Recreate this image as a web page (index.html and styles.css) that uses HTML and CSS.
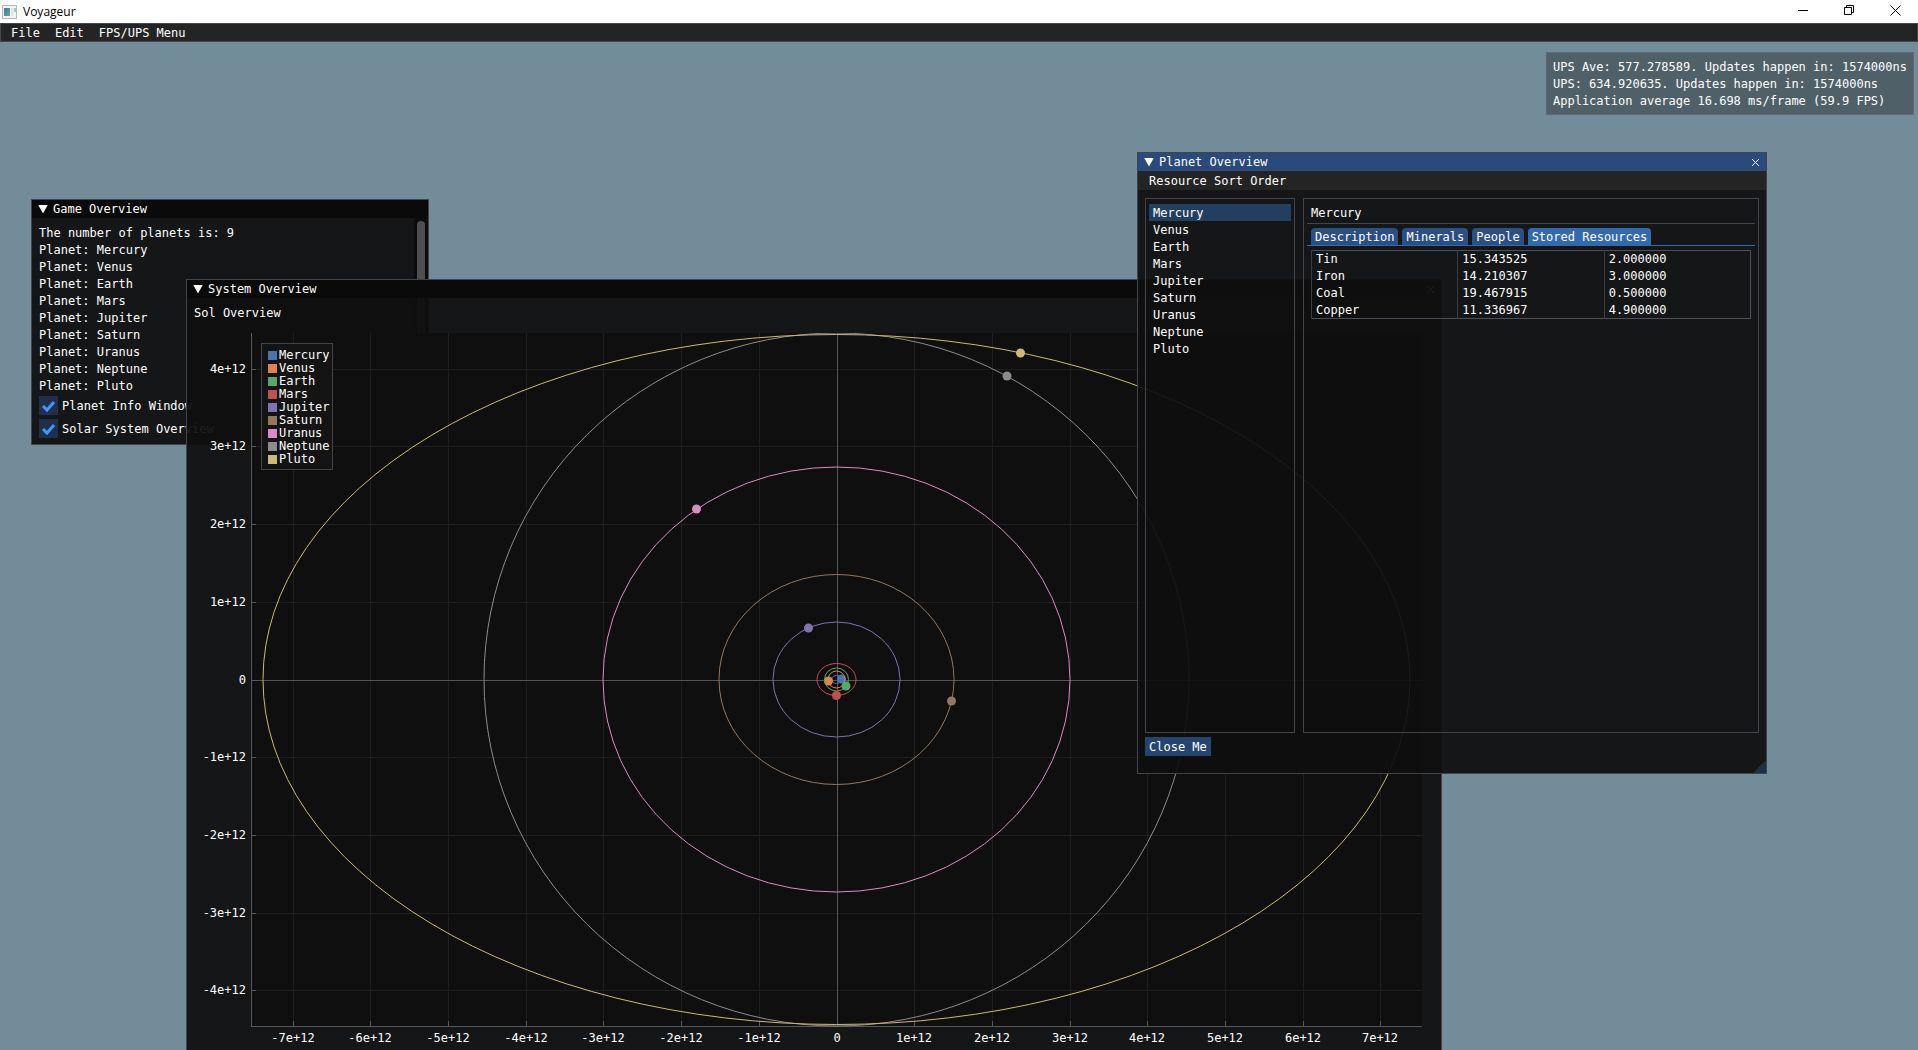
FILE: index.html
```html
<!DOCTYPE html>
<html lang="en">
<head>
<meta charset="utf-8">
<title>Voyageur</title>
<link rel="stylesheet" href="styles.css">
</head>
<body>
<header class="titlebar">
  <svg class="app-icon" width="16" height="14" viewBox="0 0 16 14" aria-hidden="true">
    <defs><linearGradient id="pane" x1="0" y1="0" x2="1" y2="1"><stop offset="0" stop-color="#3f78a8"/><stop offset="1" stop-color="#5fb08a"/></linearGradient></defs>
    <rect x="0.5" y="0.5" width="14" height="13" fill="#f4f5f6" stroke="#b4b9bf"/>
    <rect x="2" y="3" width="6" height="8" fill="url(#pane)"/>
    <rect x="9" y="3" width="2" height="8" fill="#dfe2e5"/>
    <rect x="12" y="3" width="2" height="4" fill="#9fcab8"/>
  </svg>
  <h1 class="app-name">Voyageur</h1>
  <div class="controls">
    <button class="control" aria-label="Minimize"><svg width="11" height="11" viewBox="0 0 11 11"><path d="M0 5.500h10" stroke="#000"/></svg></button>
    <button class="control" aria-label="Restore"><svg width="11" height="11" viewBox="0 0 11 11" fill="none" stroke="#000"><path d="M0.500 2.500h7v7h-7zM2.500 2.500v-2h7v7h-2"/></svg></button>
    <button class="control" aria-label="Close"><svg width="11" height="11" viewBox="0 0 11 11"><path d="M0.500 0.500l10 10M10.500 0.500l-10 10" stroke="#000"/></svg></button>
  </div>
</header>
<nav class="menubar">
  <button class="menu">File</button>
  <button class="menu">Edit</button>
  <button class="menu">FPS/UPS Menu</button>
</nav>
<main class="desktop">
  <section class="stats">
    <p class="line">UPS Ave: 577.278589. Updates happen in: 1574000ns</p>
    <p class="line">UPS: 634.920635. Updates happen in: 1574000ns</p>
    <p class="line">Application average 16.698 ms/frame (59.9 FPS)</p>
  </section>

  <section class="window game">
    <header class="window-title"><button class="collapse" aria-label="Collapse"></button><h2 class="window-name">Game Overview</h2></header>
    <div class="game-body">
      <div class="game-content">
        <p class="line">The number of planets is: 9</p>
        <p class="line">Planet: Mercury</p>
        <p class="line">Planet: Venus</p>
        <p class="line">Planet: Earth</p>
        <p class="line">Planet: Mars</p>
        <p class="line">Planet: Jupiter</p>
        <p class="line">Planet: Saturn</p>
        <p class="line">Planet: Uranus</p>
        <p class="line">Planet: Neptune</p>
        <p class="line">Planet: Pluto</p>
        <label class="check"><input type="checkbox" class="check-box" checked>Planet Info Window</label>
        <label class="check"><input type="checkbox" class="check-box" checked>Solar System Overview</label>
      </div>
      <div class="scrollbar"><div class="scroll-thumb"></div></div>
    </div>
  </section>

  <section class="window system">
    <header class="window-title"><button class="collapse" aria-label="Collapse"></button><h2 class="window-name">System Overview</h2><button class="close" aria-label="Close">
      <svg width="9" height="9" viewBox="0 0 9 9"><path d="M1 1l7 7M8 1l-7 7" stroke="#fff"/></svg></button></header>
    <p class="line system-name">Sol Overview</p>
    <div class="chart">
      <svg class="plot" width="1238" height="720" viewBox="187 330 1238 720">
        <defs><clipPath id="area"><rect x="251" y="333" width="1171" height="694"/></clipPath></defs>
        <rect class="plot-bg" x="251" y="333" width="1171" height="694"/>
        <path class="grid" d="M293.500 333v693M370.500 333v693M448.500 333v693M526.500 333v693M603.500 333v693M681.500 333v693M759.500 333v693M914.500 333v693M992.500 333v693M1070.500 333v693M1147.500 333v693M1225.500 333v693M1303.500 333v693M1380.500 333v693M251 369.500h1171M251 446.500h1171M251 524.500h1171M251 602.500h1171M251 757.500h1171M251 835.500h1171M251 913.500h1171M251 990.500h1171"/>
        <path class="zero" d="M837.500 333v693M251 680.500h1171"/>
        <path class="axis" d="M251.500 333v694M251 1026.500h1171M293.500 1021v5M370.500 1021v5M448.500 1021v5M526.500 1021v5M603.500 1021v5M681.500 1021v5M759.500 1021v5M837.500 1016v10M914.500 1021v5M992.500 1021v5M1070.500 1021v5M1147.500 1021v5M1225.500 1021v5M1303.500 1021v5M1380.500 1021v5M252 369.500h4M252 446.500h4M252 524.500h4M252 602.500h4M252 680.500h4M252 757.500h4M252 835.500h4M252 913.500h4M252 990.500h4"/>
        <g class="orbits" clip-path="url(#area)">
          <ellipse cx="836.500" cy="679.500" rx="5" ry="4" stroke="#4c72b0"/>
          <circle cx="841.500" cy="679" r="4.500" fill="#4c72b0"/>
          <ellipse cx="836.500" cy="679.500" rx="8.500" ry="8.500" stroke="#dd8452"/>
          <circle cx="828.500" cy="681" r="4.500" fill="#dd8452"/>
          <ellipse cx="836.500" cy="679.500" rx="12" ry="11.500" stroke="#55a868"/>
          <circle cx="846" cy="686" r="4.500" fill="#55a868"/>
          <ellipse cx="836.500" cy="679.500" rx="19.500" ry="16" stroke="#c44e52"/>
          <circle cx="836.500" cy="695.500" r="4.500" fill="#c44e52"/>
          <ellipse cx="836.500" cy="679.500" rx="63.500" ry="57.500" stroke="#8172b3"/>
          <circle cx="808.500" cy="628" r="4.500" fill="#8172b3"/>
          <ellipse cx="836.500" cy="679.500" rx="117.500" ry="105" stroke="#937860"/>
          <circle cx="951.500" cy="701" r="4.500" fill="#937860"/>
          <ellipse cx="836.500" cy="679.500" rx="233.500" ry="212.500" stroke="#da8bc3"/>
          <circle cx="696.500" cy="509" r="4.500" fill="#da8bc3"/>
          <ellipse cx="836.500" cy="679.500" rx="352.500" ry="346.500" stroke="#8c8c8c"/>
          <circle cx="1007" cy="376" r="4.500" fill="#8c8c8c"/>
          <ellipse cx="836.500" cy="679.500" rx="573.500" ry="345" stroke="#ccb974"/>
          <circle cx="1020.500" cy="353" r="4.500" fill="#ccb974"/>
        </g>
        <g class="tick-y">
          <text x="246" y="373">4e+12</text><text x="246" y="450">3e+12</text><text x="246" y="528">2e+12</text><text x="246" y="606">1e+12</text><text x="246" y="684">0</text><text x="246" y="761">-1e+12</text><text x="246" y="839">-2e+12</text><text x="246" y="917">-3e+12</text><text x="246" y="994">-4e+12</text>
        </g>
        <g class="tick-x">
          <text x="293" y="1042">-7e+12</text><text x="370" y="1042">-6e+12</text><text x="448" y="1042">-5e+12</text><text x="526" y="1042">-4e+12</text><text x="603" y="1042">-3e+12</text><text x="681" y="1042">-2e+12</text><text x="759" y="1042">-1e+12</text><text x="837" y="1042">0</text><text x="914" y="1042">1e+12</text><text x="992" y="1042">2e+12</text><text x="1070" y="1042">3e+12</text><text x="1147" y="1042">4e+12</text><text x="1225" y="1042">5e+12</text><text x="1303" y="1042">6e+12</text><text x="1380" y="1042">7e+12</text>
        </g>
      </svg>
      <ul class="legend">
        <li class="key mercury">Mercury</li>
        <li class="key venus">Venus</li>
        <li class="key earth">Earth</li>
        <li class="key mars">Mars</li>
        <li class="key jupiter">Jupiter</li>
        <li class="key saturn">Saturn</li>
        <li class="key uranus">Uranus</li>
        <li class="key neptune">Neptune</li>
        <li class="key pluto">Pluto</li>
      </ul>
    </div>
  </section>

  <section class="window planet">
    <header class="window-title active"><button class="collapse" aria-label="Collapse"></button><h2 class="window-name">Planet Overview</h2><button class="close" aria-label="Close">
      <svg width="9" height="9" viewBox="0 0 9 9"><path d="M1 1l7 7M8 1l-7 7" stroke="#fff"/></svg></button></header>
    <nav class="window-menu"><button class="menu">Resource Sort Order</button></nav>
    <div class="panes">
      <div class="pane list">
        <button class="item selected">Mercury</button>
        <button class="item">Venus</button>
        <button class="item">Earth</button>
        <button class="item">Mars</button>
        <button class="item">Jupiter</button>
        <button class="item">Saturn</button>
        <button class="item">Uranus</button>
        <button class="item">Neptune</button>
        <button class="item">Pluto</button>
      </div>
      <div class="pane detail">
        <h3 class="planet-name">Mercury</h3>
        <div class="tabs" role="tablist">
          <button class="tab" role="tab">Description</button>
          <button class="tab" role="tab">Minerals</button>
          <button class="tab" role="tab">People</button>
          <button class="tab current" role="tab" aria-selected="true">Stored Resources</button>
        </div>
        <table class="resources">
          <tr><td>Tin</td><td>15.343525</td><td>2.000000</td></tr>
          <tr><td>Iron</td><td>14.210307</td><td>3.000000</td></tr>
          <tr><td>Coal</td><td>19.467915</td><td>0.500000</td></tr>
          <tr><td>Copper</td><td>11.336967</td><td>4.900000</td></tr>
        </table>
      </div>
    </div>
    <button class="close-me">Close Me</button>
    <div class="grip"></div>
  </section>
</main>
</body>
</html>
```
FILE: styles.css
```css
* { box-sizing: border-box; }
body {
  margin: 0;
  height: 100vh;
  display: flex;
  flex-direction: column;
  overflow: hidden;
  background: #738c99;
  color: #fff;
  font: 12px/17px "DejaVu Sans Mono", monospace;
}
h1, h2, h3, p, ul { margin: 0; padding: 0; font: inherit; }
button { margin: 0; padding: 0; border: 0; background: none; color: inherit; font: inherit; white-space: nowrap; }
.line { white-space: pre; }

.titlebar { flex: none; height: 23px; padding-left: 2px; display: flex; align-items: center; background: #fff; color: #000; }
.app-icon { margin-right: 5px; }
.app-name { flex: 1; font: 12px/22px "Open Sans", sans-serif; }
.controls { display: flex; align-self: stretch; }
.control { width: 46px; display: flex; align-items: center; justify-content: center; padding-bottom: 2px; }
.menubar {
  flex: none; height: 19px; padding-left: 2px; display: flex;
  background: #242424; border: 1px solid #45454d;
}
.menu { padding: 0 8px; line-height: 18px; }
.menubar .menu { padding-right: 7px; }
.desktop { position: relative; flex: 1; overflow: hidden; }

.stats {
  position: absolute; right: 4px; top: 10px; padding: 6px 6px 4px;
  border: 1px solid #5f6a77; background: #506068;
}

.window { position: absolute; background: rgba(15, 15, 15, .94); border: 1px solid #43434b; display: flex; flex-direction: column; }
.game { left: 31px; top: 157px; width: 398px; height: 246px; }
.system { left: 186px; top: 237px; width: 1256px; height: 800px; }
.planet { left: 1137px; top: 110px; width: 630px; height: 622px; }

.window-title { flex: none; height: 18px; padding: 0 6px; display: flex; align-items: center; gap: 5px; background: #0a0a0a; }
.window-title.active { background: #294a7a; }
.window-name { flex: 1; line-height: 18px; }
.collapse { width: 10px; height: 9px; background: #fff; clip-path: polygon(0 0, 100% 0, 50% 100%); }
.close { display: flex; }

.game-body { flex: 1; display: flex; min-height: 0; }
.game-content { flex: 1; padding: 7px 7px 0; }
.scrollbar { width: 14px; padding: 3px; background: #0c0c0c; }
.scroll-thumb { height: 160px; border-radius: 4px; background: #4f4f4f; }
.check { display: flex; gap: 4px; height: 19px; line-height: 20px; margin: 1px 0 4px; white-space: nowrap; }
.check-box {
  appearance: none; margin: 0; width: 19px; height: 19px;
  background: #1f304d url("data:image/svg+xml,%3Csvg xmlns='http://www.w3.org/2000/svg' width='19' height='19'%3E%3Cpath d='M4 10l4 4 7-8' fill='none' stroke='%234296fa' stroke-width='3'/%3E%3C/svg%3E");
}

.system-name { padding: 7px 7px 8px; }
.chart { position: relative; }
.plot { display: block; }
.plot-bg { fill: #0f0f0f; }
.plot path { fill: none; }
.grid { stroke: #1f1f1f; }
.zero { stroke: #555; }
.axis { stroke: #575757; }
.orbits ellipse { fill: none; stroke-width: 1; }
.plot text { fill: #fff; }
.tick-y { text-anchor: end; }
.tick-x { text-anchor: middle; }
.legend {
  position: absolute; left: 74px; top: 13px; width: 72px; padding: 5px 0 3px 6px;
  border: 1px solid #43434b; background: #141414; list-style: none; line-height: 13px;
}
.key { display: flex; align-items: center; gap: 2px; }
.key::before { content: ""; width: 9px; height: 9px; background: currentColor; }
.key.mercury::before { background: #4c72b0; }
.key.venus::before { background: #dd8452; }
.key.earth::before { background: #55a868; }
.key.mars::before { background: #c44e52; }
.key.jupiter::before { background: #8172b3; }
.key.saturn::before { background: #937860; }
.key.uranus::before { background: #da8bc3; }
.key.neptune::before { background: #8c8c8c; }
.key.pluto::before { background: #ccb974; }

.window-menu { flex: none; height: 19px; padding-left: 3px; display: flex; background: #242424; }
.panes { flex: none; height: 535px; margin: 8px 7px 4px; display: flex; gap: 8px; }
.pane { border: 1px solid #43434b; display: flex; flex-direction: column; }
.list { width: 150px; padding: 5px 3px; }
.item { padding: 2px 4px 0; line-height: 15px; text-align: left; }
.item.selected { background: #233f60; }
.detail { flex: 1; padding: 5px 3px; }
.planet-name { height: 20px; padding-left: 4px; line-height: 19px; border-bottom: 1px solid #43434b; }
.tabs { margin: 4px 0; padding-left: 4px; display: flex; gap: 4px; border-bottom: 1px solid #3369ad; }
.tab { padding: 2px 4px 0; line-height: 15px; border-radius: 4px 4px 0 0; background: #2a4f85; }
.tab.current { background: #3369ad; }
.resources { width: calc(100% - 8px); margin: 0 4px; border-collapse: collapse; table-layout: fixed; border: 1px solid #4f4f59; }
.resources td { padding: 0 4px; border-left: 1px solid #3b3b40; line-height: 17px; }
.resources tr:last-child td { line-height: 16px; }
.close-me { align-self: flex-start; height: 19px; margin-left: 7px; padding: 1px 4px 0; background: #24456f; }
.grip { position: absolute; right: 0; bottom: 0; width: 13px; height: 13px; background: #1b304a; clip-path: polygon(100% 0, 100% 100%, 0 100%); }
```
